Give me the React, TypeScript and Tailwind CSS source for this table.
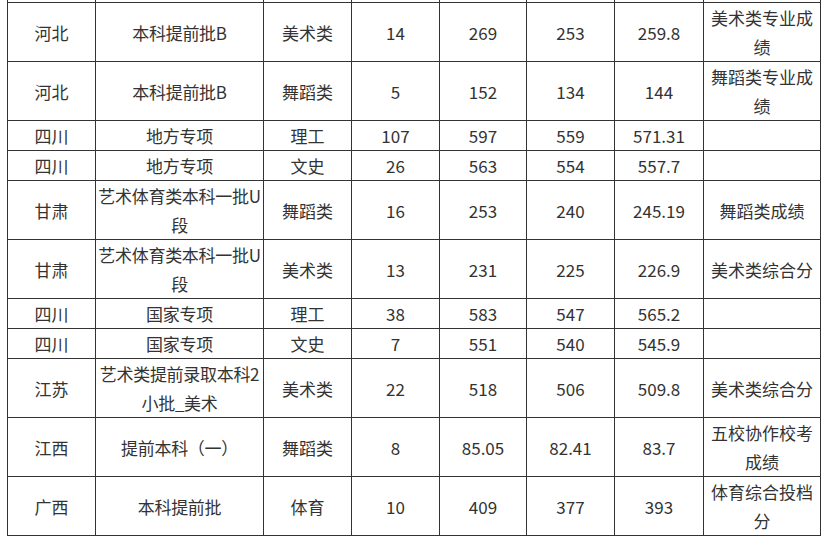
import React from "react"

type Row = { cells: string[]; h: string }

const rows: Row[] = [
  { cells: ["河北", "本科提前批B", "美术类", "14", "269", "253", "259.8", "美术类专业成绩"], h: "h-[59px]" },
  { cells: ["河北", "本科提前批B", "舞蹈类", "5", "152", "134", "144", "舞蹈类专业成绩"], h: "h-[59px]" },
  { cells: ["四川", "地方专项", "理工", "107", "597", "559", "571.31", ""], h: "h-[30px]" },
  { cells: ["四川", "地方专项", "文史", "26", "563", "554", "557.7", ""], h: "h-[30px]" },
  { cells: ["甘肃", "艺术体育类本科一批U段", "舞蹈类", "16", "253", "240", "245.19", "舞蹈类成绩"], h: "h-[59px]" },
  { cells: ["甘肃", "艺术体育类本科一批U段", "美术类", "13", "231", "225", "226.9", "美术类综合分"], h: "h-[59px]" },
  { cells: ["四川", "国家专项", "理工", "38", "583", "547", "565.2", ""], h: "h-[30px]" },
  { cells: ["四川", "国家专项", "文史", "7", "551", "540", "545.9", ""], h: "h-[30px]" },
  { cells: ["江苏", "艺术类提前录取本科2小批_美术", "美术类", "22", "518", "506", "509.8", "美术类综合分"], h: "h-[59px]" },
  { cells: ["江西", "提前本科（一）", "舞蹈类", "8", "85.05", "82.41", "83.7", "五校协作校考成绩"], h: "h-[59px]" },
  { cells: ["广西", "本科提前批", "体育", "10", "409", "377", "393", "体育综合投档分"], h: "h-[59px]" },
]

export default function App() {
  return (
    <div className="h-[550px] w-[830px] overflow-hidden bg-white pl-[7px] text-[#333] text-[17px] leading-[29px] [font-family:'Noto_Sans_CJK_SC','Noto_Sans',sans-serif]">
      <div className="grid w-[814px] grid-cols-[88px_168px_88px_88px_87px_88px_89px_117px] border-l border-[#333]">
        {Array.from({ length: 8 }).map((_, i) => (
          <div key={"top" + i} className="h-[3px] border-r border-b border-[#333]" />
        ))}
        {rows.map((row, ri) =>
          row.cells.map((c, ci) => (
            <div
              key={ri + "-" + ci}
              className={`${row.h} flex items-center justify-center border-r border-b border-[#333] text-center break-all ${
                ci === 1 ? "px-0 tracking-[-0.3px]" : "px-[1px]"
              }`}
            >
              {c}
            </div>
          ))
        )}
      </div>
    </div>
  )
}
